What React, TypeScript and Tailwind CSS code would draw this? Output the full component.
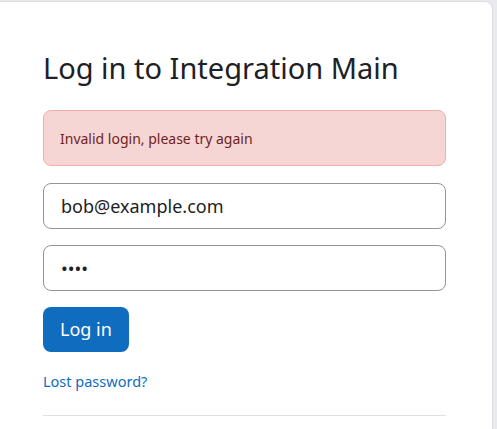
import React from 'react';

const font = { fontFamily: '"Noto Sans", "Open Sans", sans-serif' };

// Login card, cropped as in the screenshot
const App: React.FC = () => {
  return (
    <div className="h-[429px] w-[497px] overflow-hidden bg-[#e9eaed]" style={font}>
      <div className="mt-px mr-1 h-[500px] rounded-tr-lg border-r border-t border-[#dcdde0] bg-white pl-[43px] pr-[46px] pt-[46px]">
        <h1 className="text-[29px] leading-[40px] font-normal text-[#1d2125]">
          Log in to Integration Main
        </h1>

        <div className="mt-[22px] flex h-[56px] items-center rounded-lg border border-[#f1aea9] bg-[#f6d6d5] pl-4 text-[14px] text-[#6e1f1c]">
          Invalid login, please try again
        </div>

        <div className="mt-[17px] flex flex-col gap-4">
          <input
            className="h-[46px] w-full rounded-lg border border-[#8f959e] px-[17px] text-[18px] text-[#1d2125] outline-none"
            defaultValue="bob@example.com"
            style={font}
          />
          <input
            type="password"
            className="h-[46px] w-full rounded-lg border border-[#8f959e] px-[17px] text-[18px] text-[#1d2125] outline-none"
            defaultValue="pass"
            style={font}
          />
        </div>

        <button className="mt-4 h-[45px] rounded-lg bg-[#0f6cbf] px-[17px] text-[18px] text-white">
          Log in
        </button>

        <div className="mt-[17px]">
          <a href="#" className="text-[14.5px] text-[#0f6cbf]">Lost password?</a>
        </div>

        <hr className="mt-[22px] border-[#dee2e6]" />
      </div>
    </div>
  );
};

export default App;
